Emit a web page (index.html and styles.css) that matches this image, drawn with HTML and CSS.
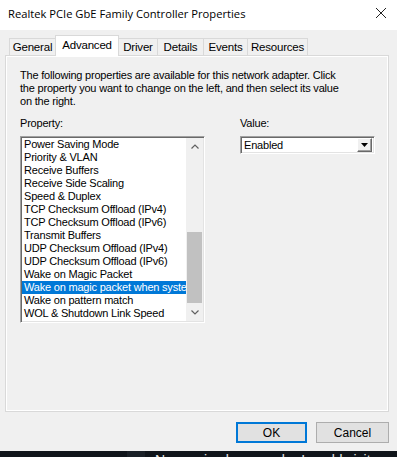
FILE: index.html
```html
<!DOCTYPE html>
<html lang="en">
<head>
  <meta charset="UTF-8">
  <title>Realtek PCIe GbE Family Controller Properties</title>
  <link rel="stylesheet" href="styles.css">
</head>
<body>
  <!-- Title bar -->
  <header class="titlebar">
    <span class="title">Realtek PCIe GbE Family Controller Properties</span>
    <svg class="close" width="12" height="12" viewBox="0 0 12 12">
      <path d="M1 1 L11 11 M11 1 L1 11" stroke="#222" stroke-width="1" fill="none"/>
    </svg>
  </header>

  <!-- Tabs -->
  <nav class="tabs">
    <div class="tab t-general">General</div>
    <div class="tab t-advanced active">Advanced</div>
    <div class="tab t-driver">Driver</div>
    <div class="tab t-details">Details</div>
    <div class="tab t-events">Events</div>
    <div class="tab t-resources">Resources</div>
  </nav>

  <!-- Tab page -->
  <section class="panel">
    <p class="intro">The following properties are available for this network adapter. Click<br>the property you want to change on the left, and then select its value<br>on the right.</p>

    <div class="fields">
      <div class="field-prop">
        <label>Property:</label>
        <div class="listbox">
          <ul class="items">
            <li>Power Saving Mode</li>
            <li>Priority &amp; VLAN</li>
            <li>Receive Buffers</li>
            <li>Receive Side Scaling</li>
            <li>Speed &amp; Duplex</li>
            <li>TCP Checksum Offload (IPv4)</li>
            <li>TCP Checksum Offload (IPv6)</li>
            <li>Transmit Buffers</li>
            <li>UDP Checksum Offload (IPv4)</li>
            <li>UDP Checksum Offload (IPv6)</li>
            <li>Wake on Magic Packet</li>
            <li class="selected">Wake on magic packet when syste</li>
            <li>Wake on pattern match</li>
            <li>WOL &amp; Shutdown Link Speed</li>
          </ul>
          <div class="scrollbar">
            <div class="arrow">
              <svg width="8" height="5" viewBox="0 0 8 5"><path d="M0.5 4.5 L4 1 L7.5 4.5" stroke="#606060" stroke-width="1.2" fill="none"/></svg>
            </div>
            <div class="track"><div class="thumb"></div></div>
            <div class="arrow">
              <svg width="8" height="5" viewBox="0 0 8 5"><path d="M0.5 0.5 L4 4 L7.5 0.5" stroke="#606060" stroke-width="1.2" fill="none"/></svg>
            </div>
          </div>
        </div>
      </div>

      <div class="field-value">
        <label>Value:</label>
        <div class="combo">
          <span class="combo-text">Enabled</span>
          <span class="combo-btn">
            <svg width="7" height="4" viewBox="0 0 7 4"><path d="M0 0 H7 L3.5 4 Z" fill="#000"/></svg>
          </span>
        </div>
      </div>
    </div>
  </section>

  <!-- Dialog buttons -->
  <footer class="buttons">
    <button class="btn btn-default">OK</button>
    <button class="btn">Cancel</button>
  </footer>

  <!-- Taskbar strip peeking in below the dialog -->
  <div class="behind">
    <div class="behind-side"></div>
    <div class="behind-text">No worries love maybe I could visit you</div>
  </div>
</body>
</html>
```

FILE: styles.css
```css
/* Base */
* { box-sizing: border-box; margin: 0; padding: 0; }
html, body { width: 397px; height: 457px; overflow: hidden; }
body {
  font-family: 'Liberation Sans', Arial, sans-serif;
  font-size: 11px;
  letter-spacing: -0.2px;
  color: #000;
  background: #f0f0f0;
  display: flex;
  flex-direction: column;
}

/* Title bar */
.titlebar {
  height: 30px;
  background: #fff;
  display: flex;
  align-items: center;
  justify-content: space-between;
  padding: 0 9px 4px 8px;
}
.title { font-family: 'Open Sans', sans-serif; font-size: 11.2px; letter-spacing: 0; color: #000; }
.close { margin-right: 1px; }

/* Tabs */
.tabs {
  height: 25px;
  display: flex;
  align-items: flex-end;
  padding-left: 9px;
  position: relative;
  z-index: 1;
}
.tab {
  height: 17px;
  border: 1px solid #d9d9d9;
  border-bottom: none;
  margin-left: -1px;
  text-align: center;
  line-height: 17px;
  font-size: 11.5px;
  background: #f0f0f0;
  color: #000;
}
.tab.active {
  height: 21px;
  margin-bottom: -1px;
  line-height: 18px;
  background: #fff;
  border-color: #d9d9d9;
}
.t-general { width: 47px; margin-left: 0; }
.t-advanced { width: 64px; }
.t-driver { width: 40px; }
.t-details { width: 47px; }
.t-events { width: 45px; }
.t-resources { width: 61px; }

/* Tab page */
.panel {
  height: 357px;
  margin-left: 5px;
  width: 384px;
  border: 1px solid #d9d9d9;
  box-shadow: inset 1px 1px 0 #fff, inset -1px -1px 0 #fff;
  padding: 13px 10px 0 14px;
}
.intro { line-height: 13px; white-space: nowrap; }

.fields { display: flex; margin-top: 9px; }
.fields label { display: block; line-height: 13px; margin-bottom: 6px; }
.field-value { margin-left: 35px; }

/* Property list */
.listbox {
  width: 185px;
  height: 187px;
  display: flex;
  background: #fff;
  border: 1px solid;
  border-color: #a0a0a0 #fff #fff #a0a0a0;
  box-shadow: inset 1px 1px 0 #696969, inset -1px -1px 0 #e3e3e3;
  padding: 1px;
}
.items {
  list-style: none;
  flex: 1;
  min-width: 0;
  overflow: hidden;
}
.items li {
  height: 13px;
  line-height: 13px;
  padding-left: 2px;
  white-space: nowrap;
  overflow: hidden;
}
.items li.selected { background: #0078d7; color: #fff; }

.scrollbar {
  width: 17px;
  background: #f0f0f0;
  display: flex;
  flex-direction: column;
}
.arrow {
  height: 17px;
  display: flex;
  align-items: center;
  justify-content: center;
}
.track { flex: 1; display: flex; flex-direction: column; justify-content: flex-end; padding: 0 1px 1px; }
.thumb { height: 71px; background: #c1c1c1; }

/* Value combo */
.combo {
  width: 135px;
  height: 18px;
  background: #fff;
  border: 1px solid;
  border-color: #a0a0a0 #fff #fff #a0a0a0;
  box-shadow: inset 1px 1px 0 #696969, inset -1px -1px 0 #e3e3e3;
  display: flex;
  align-items: center;
  justify-content: space-between;
  padding: 0 2px 0 3px;
}
.combo-btn {
  width: 15px;
  height: 14px;
  background: #f0f0f0;
  border: 1px solid;
  border-color: #fff #696969 #696969 #fff;
  box-shadow: inset -1px -1px 0 #a0a0a0;
  display: flex;
  align-items: center;
  justify-content: center;
}

/* Dialog buttons */
.buttons {
  display: flex;
  justify-content: flex-end;
  gap: 9px;
  padding: 10px 8px 8px 0;
}
.btn {
  font-family: 'Liberation Sans', Arial, sans-serif;
  font-size: 12px;
  height: 21px;
  width: 73px;
  background: #e1e1e1;
  border: 1px solid #adadad;
  color: #000;
}
.btn-default { width: 71px; border: 2px solid #0078d7; }

/* Dark strip below the dialog */
.behind {
  height: 6px;
  background: #10151b;
  display: flex;
  overflow: hidden;
}
.behind-side { width: 20px; margin-left: 127px; background: #1a2027; }
.behind-text {
  color: #e8e8e8;
  font-size: 14px;
  letter-spacing: 0;
  line-height: 14px;
  padding: 2px 0 0 10px;
  white-space: nowrap;
}
```
